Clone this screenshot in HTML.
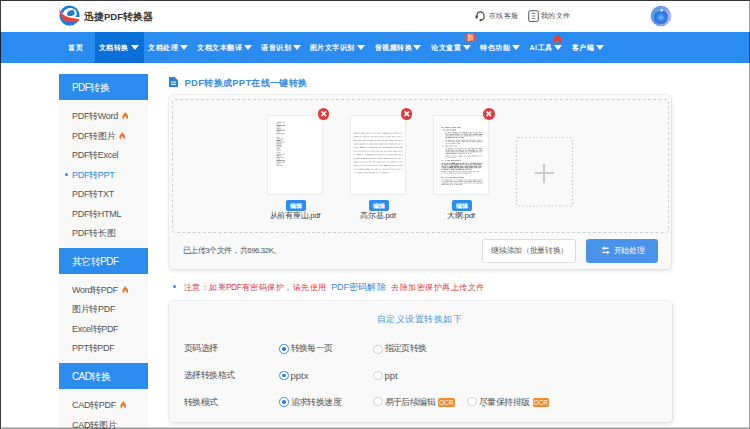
<!DOCTYPE html>
<html><head><meta charset="utf-8">
<style>
*{margin:0;padding:0;box-sizing:border-box}
html,body{width:750px;height:429px;overflow:hidden;background:#fff}
body{position:relative;font-family:"Liberation Sans",sans-serif;color:#333}
.a{position:absolute;white-space:nowrap}
#frame{position:absolute;left:0;top:0;width:750px;height:429px;border-left:1px solid rgba(0,0,0,.75);border-top:1px solid rgba(0,0,0,.78);border-right:1px solid rgba(0,0,0,.4);border-bottom:1px solid rgba(0,0,0,.4);z-index:50;pointer-events:none}
#frame2{position:absolute;left:1px;top:427px;width:748px;height:1px;background:rgba(0,0,0,.19);z-index:49}
#nav{position:absolute;left:0;top:32px;width:750px;height:31px;background:#2a8bf0}
.nt{position:absolute;top:0;height:31px;line-height:31px;font-size:7px;letter-spacing:0.5px;font-weight:700;color:#fff;white-space:nowrap}
.tri{position:absolute;width:0;height:0;border-left:4.4px solid transparent;border-right:4.4px solid transparent;border-top:5px solid #fff}
#side{position:absolute;left:59px;top:74px;width:89px;height:360px;background:#f8f8f8}
.sh{position:absolute;left:59px;width:89px;height:26px;background:#2b8cee;color:#fff;font-size:10px;letter-spacing:-0.6px;line-height:28px;padding-left:13px}
.si{position:absolute;left:72px;font-size:9px;letter-spacing:-0.3px;color:#555;line-height:12px;white-space:nowrap}
.fire{display:inline-block;vertical-align:-0.5px;margin-left:1.5px}
.card{position:absolute;background:#f9f9f9;border-radius:4px;box-shadow:1px 2px 5px rgba(0,0,0,.1),0 0 0 1px rgba(0,0,0,.05)}

.thumb{width:56px;height:80px;background:#fff;border:1px solid #ebebeb;overflow:hidden;position:absolute}
.xbtn{width:11.5px;height:11.5px;border-radius:50%;background:#e23b3b;color:#fff;font-size:7px;line-height:11.5px;text-align:center;font-weight:bold}
.ebtn{width:20.5px;height:11px;background:#2b8cee;border-radius:2px;color:#fff;font-size:6.3px;line-height:11px;text-align:center;font-weight:bold}
.fname{font-size:7.9px;letter-spacing:-0.3px;color:#444;text-align:center;line-height:11px}
.lab{left:184px;font-size:9px;letter-spacing:-0.55px;color:#555;line-height:11px}
.opt{font-size:9px;letter-spacing:-0.55px;color:#555;line-height:11px}
.rad{width:9.5px;height:9.5px;border-radius:50%;border:1px solid #cfcfcf;background:#fff}
.rad.on{border-color:#3a8ee6}
.rad.on::after{content:"";position:absolute;left:2px;top:2px;width:3.5px;height:3.5px;border-radius:50%;background:#2b7fe0}
.ocr{width:16.5px;height:9px;background:#f08a2c;border-radius:2px;color:#fff;font-size:6.6px;line-height:9px;text-align:center;letter-spacing:-0.1px}
</style></head><body>
<div id="frame"></div><div id="frame2"></div>

<!-- header -->
<svg class="a" style="left:57px;top:3px" width="26" height="25" viewBox="0 0 26 25">
  <circle cx="12.5" cy="12.6" r="10.1" fill="#1b7fd9"/>
  <path d="M0 0 H7.5 C6.5 3 6 4.6 5.4 5.6 C4 7 2.6 6 1.8 4.6 Z" fill="#fff"/>
  <ellipse cx="12.8" cy="11" rx="7" ry="5.9" fill="#fff" transform="rotate(-15 12.8 11)"/>
  <ellipse cx="13.8" cy="10.3" rx="4" ry="2.9" fill="#1b7fd9" transform="rotate(-28 13.8 10.3)"/>
  <path d="M2 4.4 C3.5 9.5 8 14.3 22.6 14.0 L22.5 16.2 C8.5 16 3.2 10.5 2 4.6 Z" fill="#fff"/>
  <path d="M2 4.6 C3.2 10.5 8.5 15.8 22.4 16 L21.4 18.8 C14 19.6 9.5 19.2 7 17.2 C4.5 15.2 2.6 11 2 4.6 Z" fill="#e8433b"/>
</svg>
<div class="a" style="left:84px;top:9.5px;font-size:9.5px;font-weight:bold;color:#333;line-height:13px">迅捷PDF转换器</div>

<svg class="a" style="left:475px;top:10px" width="11" height="12" viewBox="0 0 11 12">
  <path d="M2 6.5 V5.5 A3.5 3.6 0 0 1 9 5.5 V7.2 Q9 9.6 5.8 10.2" fill="none" stroke="#444" stroke-width="1.1"/>
  <rect x="0.5" y="5.2" width="2.2" height="3.3" rx=".8" fill="#444"/>
  <circle cx="5.5" cy="10.3" r="1" fill="#333"/>
</svg>
<div class="a" style="left:489px;top:11px;font-size:7.3px;letter-spacing:0.4px;color:#555;line-height:10px">在线客服</div>
<svg class="a" style="left:528px;top:10px" width="11" height="12" viewBox="0 0 11 12">
  <rect x="0.7" y="0.7" width="9.6" height="10.8" rx="1.6" fill="none" stroke="#555" stroke-width="1"/>
  <path d="M3.8 3.4h3.4M3.8 6h3.4M3.8 8.6h3.4" stroke="#666" stroke-width=".8"/>
</svg>
<div class="a" style="left:541px;top:11px;font-size:7.3px;letter-spacing:0.4px;color:#555;line-height:10px">我的文件</div>
<svg class="a" style="left:650px;top:5px" width="22" height="22" viewBox="0 0 22 22">
  <defs><linearGradient id="av" x1="0" y1="0" x2="1" y2="0.3"><stop offset="0" stop-color="#4f95e6"/><stop offset=".6" stop-color="#6a9fe8"/><stop offset="1" stop-color="#b7aeea"/></linearGradient>
  <radialGradient id="av2" cx="50%" cy="50%" r="50%"><stop offset="0" stop-color="#7cb6f4"/><stop offset=".55" stop-color="#3483e6"/><stop offset="1" stop-color="#2a72d8"/></radialGradient></defs>
  <circle cx="11" cy="11" r="10.3" fill="url(#av)"/>
  <path d="M4 13 C4 8 7 6.5 11 6.5 C13 5.5 15.5 6 17 8.5 C18.5 11 18 16 15 18 C12 19.5 7 19 5 16.5 Z" fill="url(#av2)"/>
  <circle cx="11.8" cy="5.3" r="1.2" fill="#e8f0ff" opacity=".9"/>
</svg>

<!-- nav -->
<div id="nav">
  <div style="position:absolute;left:94.5px;top:0;width:49.5px;height:31px;background:#0b6fd8"></div>
  <div class="nt" style="left:68.2px">首页</div>
  <div class="nt" style="left:98.5px">文档转换</div><div class="tri" style="left:131.2px;top:13.3px"></div>
  <div class="nt" style="left:148px">文档处理</div><div class="tri" style="left:180.2px;top:13.3px"></div>
  <div class="nt" style="left:197.2px">文档文本翻译</div><div class="tri" style="left:243.7px;top:13.3px"></div>
  <div class="nt" style="left:261.3px">语音识别</div><div class="tri" style="left:293.2px;top:13.3px"></div>
  <div class="nt" style="left:309.8px">图片文字识别</div><div class="tri" style="left:357.2px;top:13.3px"></div>
  <div class="nt" style="left:374.8px">音视频转换</div><div class="tri" style="left:413.2px;top:13.3px"></div>
  <div class="nt" style="left:431.2px">论文查重</div><div class="tri" style="left:463.2px;top:13.3px"></div>
  <div class="nt" style="left:480px">特色功能</div><div class="tri" style="left:512.2px;top:13.3px"></div>
  <div class="nt" style="left:529.5px">AI工具</div><div class="tri" style="left:553.7px;top:13.3px"></div>
  <div class="nt" style="left:571.5px">客户端</div><div class="tri" style="left:595.7px;top:13.3px"></div>
  <div style="position:absolute;left:465px;top:1px;width:10.5px;height:9px;background:#e35a2a;border-radius:2px;color:#fff;font-size:7px;line-height:9px;text-align:center">新</div><div style="position:absolute;left:469px;top:10px;width:0;height:0;border-left:1.3px solid transparent;border-right:1.3px solid transparent;border-top:1.5px solid #e35a2a"></div>
  <svg style="position:absolute;left:552.5px;top:2px" width="9" height="10" viewBox="0 0 9 10"><path d="M4.5 0 C6 2 9 4 8.5 7 C8.3 9 7 10 6.5 10 C6.8 8 5.5 6.5 4.5 6 C3.5 6.5 2.2 8 2.5 10 C2 10 0.5 9 0.5 7 C0.3 4 3 2 4.5 0 Z" fill="#f03c2a"/></svg>
</div>

<!-- sidebar -->
<div id="side"></div>
<div class="sh" style="top:74px">PDF转换</div>
<div class="si" style="top:110px">PDF转Word <svg class="fire" width="6.5" height="7.5" viewBox="0 0 9 10"><path d="M4.5 0 C6 2 9 4 8.5 7 C8.3 9 7 10 6.5 10 C6.8 8 5.5 6.5 4.5 6 C3.5 6.5 2.2 8 2.5 10 C2 10 0.5 9 0.5 7 C0.3 4 3 2 4.5 0 Z" fill="#f07a2a"/></svg></div>
<div class="si" style="top:129.5px">PDF转图片 <svg class="fire" width="6.5" height="7.5" viewBox="0 0 9 10"><path d="M4.5 0 C6 2 9 4 8.5 7 C8.3 9 7 10 6.5 10 C6.8 8 5.5 6.5 4.5 6 C3.5 6.5 2.2 8 2.5 10 C2 10 0.5 9 0.5 7 C0.3 4 3 2 4.5 0 Z" fill="#f07a2a"/></svg></div>
<div class="si" style="top:149px">PDF转Excel</div>
<div class="a" style="left:64.5px;top:173px;width:3px;height:3px;border-radius:50%;background:#2b8cee"></div>
<div class="si" style="top:168.5px;color:#2b8cee">PDF转PPT</div>
<div class="si" style="top:188px">PDF转TXT</div>
<div class="si" style="top:207.5px">PDF转HTML</div>
<div class="si" style="top:227px">PDF转长图</div>
<div class="sh" style="top:248px">其它转PDF</div>
<div class="si" style="top:283.5px">Word转PDF <svg class="fire" width="6.5" height="7.5" viewBox="0 0 9 10"><path d="M4.5 0 C6 2 9 4 8.5 7 C8.3 9 7 10 6.5 10 C6.8 8 5.5 6.5 4.5 6 C3.5 6.5 2.2 8 2.5 10 C2 10 0.5 9 0.5 7 C0.3 4 3 2 4.5 0 Z" fill="#f07a2a"/></svg></div>
<div class="si" style="top:303px">图片转PDF</div>
<div class="si" style="top:322.5px">Excel转PDF</div>
<div class="si" style="top:342px">PPT转PDF</div>
<div class="sh" style="top:363px">CAD转换</div>
<div class="si" style="top:399px">CAD转PDF <svg class="fire" width="6.5" height="7.5" viewBox="0 0 9 10"><path d="M4.5 0 C6 2 9 4 8.5 7 C8.3 9 7 10 6.5 10 C6.8 8 5.5 6.5 4.5 6 C3.5 6.5 2.2 8 2.5 10 C2 10 0.5 9 0.5 7 C0.3 4 3 2 4.5 0 Z" fill="#f07a2a"/></svg></div>
<div class="si" style="top:418.5px">CAD转图片</div>

<!-- main title -->
<svg class="a" style="left:169px;top:77px" width="9" height="10" viewBox="0 0 9 10"><path d="M0 0 H5.6 L9 3.2 V10 H0 Z" fill="#2a80e2"/><path d="M2 5.2h5M2 7.4h5" stroke="#c4ecff" stroke-width="1.25"/></svg>
<div class="a" style="left:184.5px;top:75.5px;font-size:9.4px;letter-spacing:0.33px;font-weight:bold;color:#3a8ee6;line-height:13px">PDF转换成PPT在线一键转换</div>

<!-- upload card -->
<div class="card" style="left:169px;top:95px;width:502px;height:174px"></div>
<svg class="a" style="left:171px;top:98px" width="500" height="137"><rect x="1.5" y="1.5" width="496" height="133" rx="2.5" fill="none" stroke="#cdcdcd" stroke-width="1" stroke-dasharray="2.8 2.4"/></svg>


<!-- thumbnails -->
<div class="a thumb" style="left:267px;top:115px"><svg width="56" height="80" style="position:absolute;left:-1px;top:-1px"><rect x="9.5" y="6.80" width="5.5" height="0.85" fill="#222" opacity="0.38"/><rect x="15.4" y="6.80" width="2.5" height="0.85" fill="#222" opacity="0.32"/><rect x="9.5" y="8.40" width="2.7" height="0.85" fill="#222" opacity="0.38"/><rect x="12.6" y="8.40" width="0.9" height="0.85" fill="#222" opacity="0.32"/><rect x="9.5" y="10.00" width="4.5" height="0.85" fill="#222" opacity="0.6"/><rect x="14.4" y="10.00" width="3.5" height="0.85" fill="#222" opacity="0.51"/><rect x="9.5" y="11.60" width="2.3" height="0.85" fill="#222" opacity="0.38"/><rect x="12.2" y="11.60" width="1.3" height="0.85" fill="#222" opacity="0.32"/><rect x="9.5" y="13.20" width="2.9" height="0.85" fill="#222" opacity="0.38"/><rect x="12.8" y="13.20" width="1.2" height="0.85" fill="#222" opacity="0.32"/><rect x="9.5" y="14.80" width="4.9" height="0.85" fill="#222" opacity="0.6"/><rect x="14.8" y="14.80" width="3.1" height="0.85" fill="#222" opacity="0.51"/><rect x="9.5" y="16.40" width="1.8" height="0.85" fill="#222" opacity="0.38"/><rect x="11.7" y="16.40" width="1.8" height="0.85" fill="#222" opacity="0.32"/><rect x="9.5" y="18.00" width="4.1" height="0.85" fill="#222" opacity="0.38"/><rect x="14.0" y="18.00" width="3.9" height="0.85" fill="#222" opacity="0.32"/><rect x="9.5" y="21.90" width="2.0" height="0.85" fill="#222" opacity="0.38"/><rect x="11.9" y="21.90" width="1.1" height="0.85" fill="#222" opacity="0.32"/><rect x="9.5" y="23.50" width="4.1" height="0.85" fill="#222" opacity="0.38"/><rect x="14.0" y="23.50" width="2.5" height="0.85" fill="#222" opacity="0.32"/><rect x="9.5" y="25.10" width="3.5" height="0.85" fill="#222" opacity="0.6"/><rect x="13.4" y="25.10" width="1.1" height="0.85" fill="#222" opacity="0.51"/><rect x="9.5" y="26.70" width="5.0" height="0.85" fill="#222" opacity="0.38"/><rect x="14.9" y="26.70" width="3.0" height="0.85" fill="#222" opacity="0.32"/><rect x="9.5" y="28.30" width="3.0" height="0.85" fill="#222" opacity="0.38"/><rect x="12.9" y="28.30" width="1.6" height="0.85" fill="#222" opacity="0.32"/><rect x="9.5" y="29.90" width="2.0" height="0.85" fill="#222" opacity="0.6"/><rect x="11.9" y="29.90" width="2.6" height="0.85" fill="#222" opacity="0.51"/><rect x="9.5" y="31.50" width="2.1" height="0.85" fill="#222" opacity="0.38"/><rect x="12.0" y="31.50" width="2.5" height="0.85" fill="#222" opacity="0.32"/><rect x="9.5" y="33.10" width="1.6" height="0.85" fill="#222" opacity="0.38"/><rect x="11.5" y="33.10" width="1.5" height="0.85" fill="#222" opacity="0.32"/><rect x="9.5" y="34.70" width="2.6" height="0.85" fill="#222" opacity="0.38"/><rect x="12.5" y="34.70" width="1.5" height="0.85" fill="#222" opacity="0.32"/><rect x="9.5" y="37.20" width="2.2" height="0.85" fill="#222" opacity="0.38"/><rect x="12.1" y="37.20" width="1.4" height="0.85" fill="#222" opacity="0.32"/><rect x="9.5" y="38.80" width="4.8" height="0.85" fill="#222" opacity="0.38"/><rect x="14.7" y="38.80" width="3.2" height="0.85" fill="#222" opacity="0.32"/><rect x="9.5" y="40.40" width="2.5" height="0.85" fill="#222" opacity="0.6"/><rect x="12.4" y="40.40" width="1.6" height="0.85" fill="#222" opacity="0.51"/><rect x="9.5" y="42.00" width="3.4" height="0.85" fill="#222" opacity="0.38"/><rect x="13.3" y="42.00" width="3.2" height="0.85" fill="#222" opacity="0.32"/><rect x="9.5" y="43.60" width="2.1" height="0.85" fill="#222" opacity="0.38"/><rect x="12.0" y="43.60" width="1.0" height="0.85" fill="#222" opacity="0.32"/><rect x="9.5" y="45.20" width="5.0" height="0.85" fill="#222" opacity="0.6"/><rect x="14.9" y="45.20" width="3.0" height="0.85" fill="#222" opacity="0.51"/><rect x="9.5" y="46.80" width="5.9" height="0.85" fill="#222" opacity="0.38"/><rect x="15.8" y="46.80" width="2.1" height="0.85" fill="#222" opacity="0.32"/><rect x="9.5" y="48.40" width="1.7" height="0.85" fill="#222" opacity="0.38"/><rect x="11.6" y="48.40" width="1.9" height="0.85" fill="#222" opacity="0.32"/><rect x="9.5" y="50.00" width="3.0" height="0.85" fill="#222" opacity="0.38"/><rect x="12.9" y="50.00" width="2.6" height="0.85" fill="#222" opacity="0.32"/></svg></div>
<div class="a xbtn" style="left:317.5px;top:108px"><svg width="11.5" height="11.5" viewBox="0 0 11.5 11.5" style="display:block"><path d="M3.9 3.9L7.6 7.6M7.6 3.9L3.9 7.6" stroke="#fff" stroke-width="1.5" stroke-linecap="round"/></svg></div>
<div class="a ebtn" style="left:285.5px;top:199.5px">编辑</div>
<div class="a fname" style="left:255px;width:80px;top:210px">从前有座山.pdf</div>

<div class="a thumb" style="left:350px;top:115px"><svg width="56" height="80" style="position:absolute;left:-1px;top:-1px"><rect x="3.8" y="17.80" width="3.2" height="0.8" fill="#222" opacity="0.40"/><rect x="7.6" y="17.80" width="2.0" height="0.8" fill="#222" opacity="0.40"/><rect x="10.7" y="17.80" width="4.4" height="0.8" fill="#222" opacity="0.40"/><rect x="16.0" y="17.80" width="4.0" height="0.8" fill="#222" opacity="0.30"/><rect x="20.7" y="17.80" width="2.6" height="0.8" fill="#222" opacity="0.26"/><rect x="23.7" y="17.80" width="2.3" height="0.8" fill="#222" opacity="0.30"/><rect x="26.8" y="17.80" width="4.8" height="0.8" fill="#222" opacity="0.34"/><rect x="32.6" y="17.80" width="5.0" height="0.8" fill="#222" opacity="0.43"/><rect x="38.1" y="17.80" width="2.0" height="0.8" fill="#222" opacity="0.30"/><rect x="40.7" y="17.80" width="2.0" height="0.8" fill="#222" opacity="0.36"/><rect x="43.6" y="17.80" width="4.4" height="0.8" fill="#222" opacity="0.34"/><rect x="48.8" y="17.80" width="3.7" height="0.8" fill="#222" opacity="0.28"/><rect x="3.8" y="21.40" width="4.7" height="0.8" fill="#222" opacity="0.40"/><rect x="9.3" y="21.40" width="3.0" height="0.8" fill="#222" opacity="0.29"/><rect x="13.2" y="21.40" width="2.5" height="0.8" fill="#222" opacity="0.40"/><rect x="16.6" y="21.40" width="2.7" height="0.8" fill="#222" opacity="0.33"/><rect x="20.3" y="21.40" width="4.0" height="0.8" fill="#222" opacity="0.29"/><rect x="24.7" y="21.40" width="1.8" height="0.8" fill="#222" opacity="0.41"/><rect x="27.4" y="21.40" width="1.8" height="0.8" fill="#222" opacity="0.40"/><rect x="30.1" y="21.40" width="3.7" height="0.8" fill="#222" opacity="0.33"/><rect x="34.6" y="21.40" width="1.7" height="0.8" fill="#222" opacity="0.26"/><rect x="37.3" y="21.40" width="3.7" height="0.8" fill="#222" opacity="0.35"/><rect x="41.9" y="21.40" width="2.8" height="0.8" fill="#222" opacity="0.41"/><rect x="45.6" y="21.40" width="2.0" height="0.8" fill="#222" opacity="0.30"/><rect x="48.2" y="21.40" width="2.1" height="0.8" fill="#222" opacity="0.36"/><rect x="50.9" y="21.40" width="1.6" height="0.8" fill="#222" opacity="0.29"/><rect x="3.8" y="25.00" width="2.5" height="0.8" fill="#222" opacity="0.34"/><rect x="7.1" y="25.00" width="4.6" height="0.8" fill="#222" opacity="0.34"/><rect x="12.7" y="25.00" width="3.1" height="0.8" fill="#222" opacity="0.35"/><rect x="16.5" y="25.00" width="1.3" height="0.8" fill="#222" opacity="0.34"/><rect x="18.3" y="25.00" width="1.2" height="0.8" fill="#222" opacity="0.40"/><rect x="20.0" y="25.00" width="3.0" height="0.8" fill="#222" opacity="0.39"/><rect x="23.7" y="25.00" width="2.4" height="0.8" fill="#222" opacity="0.35"/><rect x="26.9" y="25.00" width="4.2" height="0.8" fill="#222" opacity="0.28"/><rect x="31.8" y="25.00" width="2.1" height="0.8" fill="#222" opacity="0.31"/><rect x="34.8" y="25.00" width="3.1" height="0.8" fill="#222" opacity="0.36"/><rect x="38.8" y="25.00" width="4.7" height="0.8" fill="#222" opacity="0.34"/><rect x="44.3" y="25.00" width="3.1" height="0.8" fill="#222" opacity="0.35"/><rect x="48.2" y="25.00" width="2.9" height="0.8" fill="#222" opacity="0.35"/><rect x="51.8" y="25.00" width="0.7" height="0.8" fill="#222" opacity="0.38"/><rect x="3.8" y="28.60" width="4.8" height="0.8" fill="#222" opacity="0.31"/><rect x="9.3" y="28.60" width="4.8" height="0.8" fill="#222" opacity="0.40"/><rect x="14.6" y="28.60" width="1.7" height="0.8" fill="#222" opacity="0.34"/><rect x="16.7" y="28.60" width="2.1" height="0.8" fill="#222" opacity="0.28"/><rect x="19.6" y="28.60" width="4.2" height="0.8" fill="#222" opacity="0.41"/><rect x="24.3" y="28.60" width="3.9" height="0.8" fill="#222" opacity="0.38"/><rect x="28.7" y="28.60" width="4.6" height="0.8" fill="#222" opacity="0.43"/><rect x="33.8" y="28.60" width="4.8" height="0.8" fill="#222" opacity="0.33"/><rect x="39.3" y="28.60" width="5.0" height="0.8" fill="#222" opacity="0.40"/><rect x="44.7" y="28.60" width="2.8" height="0.8" fill="#222" opacity="0.35"/><rect x="48.2" y="28.60" width="1.9" height="0.8" fill="#222" opacity="0.31"/><rect x="51.0" y="28.60" width="1.3" height="0.8" fill="#222" opacity="0.35"/><rect x="3.8" y="32.20" width="1.3" height="0.8" fill="#222" opacity="0.31"/><rect x="5.8" y="32.20" width="3.1" height="0.8" fill="#222" opacity="0.28"/><rect x="10.0" y="32.20" width="4.2" height="0.8" fill="#222" opacity="0.43"/><rect x="14.6" y="32.20" width="2.2" height="0.8" fill="#222" opacity="0.28"/><rect x="17.7" y="32.20" width="2.2" height="0.8" fill="#222" opacity="0.29"/><rect x="20.6" y="32.20" width="4.7" height="0.8" fill="#222" opacity="0.40"/><rect x="25.8" y="32.20" width="1.8" height="0.8" fill="#222" opacity="0.41"/><rect x="28.3" y="32.20" width="3.9" height="0.8" fill="#222" opacity="0.28"/><rect x="32.6" y="32.20" width="3.8" height="0.8" fill="#222" opacity="0.34"/><rect x="36.9" y="32.20" width="4.8" height="0.8" fill="#222" opacity="0.38"/><rect x="42.5" y="32.20" width="1.5" height="0.8" fill="#222" opacity="0.41"/><rect x="44.5" y="32.20" width="4.5" height="0.8" fill="#222" opacity="0.34"/><rect x="49.6" y="32.20" width="2.9" height="0.8" fill="#222" opacity="0.43"/><rect x="3.8" y="35.80" width="1.7" height="0.8" fill="#222" opacity="0.35"/><rect x="6.0" y="35.80" width="1.6" height="0.8" fill="#222" opacity="0.29"/><rect x="8.1" y="35.80" width="2.0" height="0.8" fill="#222" opacity="0.31"/><rect x="10.6" y="35.80" width="4.1" height="0.8" fill="#222" opacity="0.31"/><rect x="15.4" y="35.80" width="1.9" height="0.8" fill="#222" opacity="0.33"/><rect x="17.7" y="35.80" width="2.2" height="0.8" fill="#222" opacity="0.26"/><rect x="20.7" y="35.80" width="3.3" height="0.8" fill="#222" opacity="0.30"/><rect x="24.7" y="35.80" width="4.8" height="0.8" fill="#222" opacity="0.28"/><rect x="30.3" y="35.80" width="2.8" height="0.8" fill="#222" opacity="0.35"/><rect x="34.1" y="35.80" width="2.7" height="0.8" fill="#222" opacity="0.35"/><rect x="37.6" y="35.80" width="4.9" height="0.8" fill="#222" opacity="0.33"/><rect x="43.4" y="35.80" width="3.9" height="0.8" fill="#222" opacity="0.38"/><rect x="47.9" y="35.80" width="2.5" height="0.8" fill="#222" opacity="0.28"/><rect x="50.9" y="35.80" width="1.5" height="0.8" fill="#222" opacity="0.39"/><rect x="3.8" y="39.40" width="1.8" height="0.8" fill="#222" opacity="0.28"/><rect x="6.5" y="39.40" width="4.5" height="0.8" fill="#222" opacity="0.38"/><rect x="11.6" y="39.40" width="2.1" height="0.8" fill="#222" opacity="0.31"/><rect x="14.4" y="39.40" width="1.8" height="0.8" fill="#222" opacity="0.34"/><rect x="16.8" y="39.40" width="4.9" height="0.8" fill="#222" opacity="0.43"/><rect x="22.3" y="39.40" width="2.1" height="0.8" fill="#222" opacity="0.43"/><rect x="25.1" y="39.40" width="2.6" height="0.8" fill="#222" opacity="0.26"/><rect x="28.2" y="39.40" width="3.0" height="0.8" fill="#222" opacity="0.35"/><rect x="31.8" y="39.40" width="3.1" height="0.8" fill="#222" opacity="0.26"/><rect x="35.4" y="39.40" width="1.5" height="0.8" fill="#222" opacity="0.33"/><rect x="37.4" y="39.40" width="1.3" height="0.8" fill="#222" opacity="0.31"/><rect x="39.2" y="39.40" width="3.4" height="0.8" fill="#222" opacity="0.35"/><rect x="43.5" y="39.40" width="3.7" height="0.8" fill="#222" opacity="0.39"/><rect x="48.1" y="39.40" width="2.7" height="0.8" fill="#222" opacity="0.31"/><rect x="51.8" y="39.40" width="0.7" height="0.8" fill="#222" opacity="0.39"/><rect x="3.8" y="43.00" width="1.4" height="0.8" fill="#222" opacity="0.40"/><rect x="6.1" y="43.00" width="3.6" height="0.8" fill="#222" opacity="0.39"/><rect x="10.6" y="43.00" width="1.7" height="0.8" fill="#222" opacity="0.35"/><rect x="13.0" y="43.00" width="4.4" height="0.8" fill="#222" opacity="0.40"/><rect x="18.3" y="43.00" width="3.4" height="0.8" fill="#222" opacity="0.41"/><rect x="22.5" y="43.00" width="3.8" height="0.8" fill="#222" opacity="0.30"/><rect x="26.8" y="43.00" width="1.7" height="0.8" fill="#222" opacity="0.33"/><rect x="28.9" y="43.00" width="4.4" height="0.8" fill="#222" opacity="0.36"/><rect x="34.1" y="43.00" width="3.6" height="0.8" fill="#222" opacity="0.38"/><rect x="38.4" y="43.00" width="1.2" height="0.8" fill="#222" opacity="0.40"/><rect x="40.4" y="43.00" width="3.1" height="0.8" fill="#222" opacity="0.35"/><rect x="44.3" y="43.00" width="1.5" height="0.8" fill="#222" opacity="0.39"/><rect x="46.3" y="43.00" width="1.5" height="0.8" fill="#222" opacity="0.31"/><rect x="48.6" y="43.00" width="2.0" height="0.8" fill="#222" opacity="0.39"/><rect x="51.6" y="43.00" width="0.9" height="0.8" fill="#222" opacity="0.33"/><rect x="3.8" y="46.60" width="3.8" height="0.8" fill="#222" opacity="0.39"/><rect x="8.4" y="46.60" width="3.6" height="0.8" fill="#222" opacity="0.28"/><rect x="12.5" y="46.60" width="2.2" height="0.8" fill="#222" opacity="0.39"/><rect x="15.2" y="46.60" width="3.4" height="0.8" fill="#222" opacity="0.26"/><rect x="19.0" y="46.60" width="2.2" height="0.8" fill="#222" opacity="0.38"/><rect x="22.1" y="46.60" width="3.8" height="0.8" fill="#222" opacity="0.31"/><rect x="26.6" y="46.60" width="3.0" height="0.8" fill="#222" opacity="0.34"/><rect x="30.0" y="46.60" width="4.6" height="0.8" fill="#222" opacity="0.30"/><rect x="35.6" y="46.60" width="4.8" height="0.8" fill="#222" opacity="0.26"/><rect x="41.0" y="46.60" width="4.3" height="0.8" fill="#222" opacity="0.43"/><rect x="46.0" y="46.60" width="2.2" height="0.8" fill="#222" opacity="0.30"/><rect x="49.2" y="46.60" width="2.0" height="0.8" fill="#222" opacity="0.36"/><rect x="51.7" y="46.60" width="0.8" height="0.8" fill="#222" opacity="0.43"/><rect x="3.8" y="50.20" width="4.3" height="0.8" fill="#222" opacity="0.35"/><rect x="9.0" y="50.20" width="3.9" height="0.8" fill="#222" opacity="0.30"/><rect x="13.9" y="50.20" width="3.0" height="0.8" fill="#222" opacity="0.26"/><rect x="17.3" y="50.20" width="3.1" height="0.8" fill="#222" opacity="0.34"/><rect x="21.0" y="50.20" width="1.7" height="0.8" fill="#222" opacity="0.33"/><rect x="23.3" y="50.20" width="4.4" height="0.8" fill="#222" opacity="0.26"/><rect x="28.5" y="50.20" width="4.4" height="0.8" fill="#222" opacity="0.29"/><rect x="33.9" y="50.20" width="3.9" height="0.8" fill="#222" opacity="0.41"/><rect x="38.4" y="50.20" width="2.6" height="0.8" fill="#222" opacity="0.33"/><rect x="42.0" y="50.20" width="3.4" height="0.8" fill="#222" opacity="0.33"/><rect x="46.1" y="50.20" width="2.2" height="0.8" fill="#222" opacity="0.28"/><rect x="48.8" y="50.20" width="3.7" height="0.8" fill="#222" opacity="0.31"/><rect x="3.8" y="53.80" width="2.1" height="0.8" fill="#222" opacity="0.31"/><rect x="6.7" y="53.80" width="1.9" height="0.8" fill="#222" opacity="0.33"/><rect x="9.5" y="53.80" width="4.6" height="0.8" fill="#222" opacity="0.40"/><rect x="14.9" y="53.80" width="4.7" height="0.8" fill="#222" opacity="0.43"/><rect x="20.3" y="53.80" width="3.9" height="0.8" fill="#222" opacity="0.28"/><rect x="25.1" y="53.80" width="2.9" height="0.8" fill="#222" opacity="0.39"/><rect x="28.8" y="53.80" width="2.3" height="0.8" fill="#222" opacity="0.28"/><rect x="32.0" y="53.80" width="1.7" height="0.8" fill="#222" opacity="0.34"/><rect x="34.3" y="53.80" width="2.3" height="0.8" fill="#222" opacity="0.39"/><rect x="37.6" y="53.80" width="2.2" height="0.8" fill="#222" opacity="0.38"/><rect x="40.4" y="53.80" width="3.3" height="0.8" fill="#222" opacity="0.33"/><rect x="44.2" y="53.80" width="1.8" height="0.8" fill="#222" opacity="0.30"/><rect x="47.0" y="53.80" width="3.1" height="0.8" fill="#222" opacity="0.30"/><rect x="51.0" y="53.80" width="1.5" height="0.8" fill="#222" opacity="0.34"/><rect x="3.8" y="57.40" width="1.9" height="0.8" fill="#222" opacity="0.28"/><rect x="6.3" y="57.40" width="1.5" height="0.8" fill="#222" opacity="0.30"/><rect x="8.4" y="57.40" width="3.4" height="0.8" fill="#222" opacity="0.41"/><rect x="12.7" y="57.40" width="2.8" height="0.8" fill="#222" opacity="0.34"/><rect x="16.1" y="57.40" width="2.6" height="0.8" fill="#222" opacity="0.33"/><rect x="19.2" y="57.40" width="2.3" height="0.8" fill="#222" opacity="0.43"/><rect x="21.9" y="57.40" width="3.1" height="0.8" fill="#222" opacity="0.36"/><rect x="26.0" y="57.40" width="2.0" height="0.8" fill="#222" opacity="0.31"/><rect x="28.5" y="57.40" width="2.7" height="0.8" fill="#222" opacity="0.34"/><rect x="32.2" y="57.40" width="4.4" height="0.8" fill="#222" opacity="0.41"/><rect x="37.1" y="57.40" width="1.3" height="0.8" fill="#222" opacity="0.39"/><rect x="39.3" y="57.40" width="0.7" height="0.8" fill="#222" opacity="0.36"/></svg></div>
<div class="a xbtn" style="left:400.5px;top:108px"><svg width="11.5" height="11.5" viewBox="0 0 11.5 11.5" style="display:block"><path d="M3.9 3.9L7.6 7.6M7.6 3.9L3.9 7.6" stroke="#fff" stroke-width="1.5" stroke-linecap="round"/></svg></div>
<div class="a ebtn" style="left:368.5px;top:199.5px">编辑</div>
<div class="a fname" style="left:338px;width:80px;top:210px">高尔基.pdf</div>

<div class="a thumb" style="left:433px;top:115px"><svg width="56" height="80" style="position:absolute;left:-1px;top:-1px"><rect x="8.5" y="12.30" width="2.0" height="0.75" fill="#222" opacity="0.57"/><rect x="12.0" y="12.30" width="4.5" height="0.75" fill="#222" opacity="0.58"/><rect x="17.0" y="12.30" width="1.6" height="0.75" fill="#222" opacity="0.39"/><rect x="19.3" y="12.30" width="3.8" height="0.75" fill="#222" opacity="0.57"/><rect x="24.0" y="12.30" width="3.7" height="0.75" fill="#222" opacity="0.54"/><rect x="9.5" y="14.60" width="3.3" height="0.75" fill="#222" opacity="0.46"/><rect x="13.7" y="14.60" width="2.1" height="0.75" fill="#222" opacity="0.72"/><rect x="16.5" y="14.60" width="2.4" height="0.75" fill="#222" opacity="0.49"/><rect x="19.4" y="14.60" width="3.6" height="0.75" fill="#222" opacity="0.67"/><rect x="12.5" y="17.40" width="1.5" height="0.75" fill="#222" opacity="0.52"/><rect x="14.7" y="17.40" width="2.7" height="0.75" fill="#222" opacity="0.43"/><rect x="18.2" y="17.40" width="1.2" height="0.75" fill="#222" opacity="0.46"/><rect x="20.1" y="17.40" width="4.8" height="0.75" fill="#222" opacity="0.55"/><rect x="25.8" y="17.40" width="3.0" height="0.75" fill="#222" opacity="0.45"/><rect x="29.4" y="17.40" width="4.9" height="0.75" fill="#222" opacity="0.57"/><rect x="34.8" y="17.40" width="1.3" height="0.75" fill="#222" opacity="0.51"/><rect x="36.9" y="17.40" width="2.8" height="0.75" fill="#222" opacity="0.45"/><rect x="40.5" y="17.40" width="4.7" height="0.75" fill="#222" opacity="0.43"/><rect x="45.7" y="17.40" width="2.5" height="0.75" fill="#222" opacity="0.49"/><rect x="48.9" y="17.40" width="0.6" height="0.75" fill="#222" opacity="0.58"/><rect x="12.5" y="18.95" width="3.1" height="0.75" fill="#222" opacity="0.43"/><rect x="16.6" y="18.95" width="2.4" height="0.75" fill="#222" opacity="0.59"/><rect x="19.5" y="18.95" width="2.0" height="0.75" fill="#222" opacity="0.58"/><rect x="22.1" y="18.95" width="4.8" height="0.75" fill="#222" opacity="0.51"/><rect x="27.5" y="18.95" width="2.0" height="0.75" fill="#222" opacity="0.49"/><rect x="30.3" y="18.95" width="4.8" height="0.75" fill="#222" opacity="0.42"/><rect x="35.8" y="18.95" width="2.0" height="0.75" fill="#222" opacity="0.62"/><rect x="38.3" y="18.95" width="1.4" height="0.75" fill="#222" opacity="0.41"/><rect x="40.3" y="18.95" width="4.6" height="0.75" fill="#222" opacity="0.61"/><rect x="45.7" y="18.95" width="3.8" height="0.75" fill="#222" opacity="0.62"/><rect x="12.5" y="20.50" width="1.9" height="0.75" fill="#222" opacity="0.62"/><rect x="15.3" y="20.50" width="1.3" height="0.75" fill="#222" opacity="0.55"/><rect x="17.2" y="20.50" width="2.6" height="0.75" fill="#222" opacity="0.46"/><rect x="20.3" y="20.50" width="1.2" height="0.75" fill="#222" opacity="0.45"/><rect x="22.1" y="20.50" width="4.8" height="0.75" fill="#222" opacity="0.42"/><rect x="28.0" y="20.50" width="2.0" height="0.75" fill="#222" opacity="0.48"/><rect x="30.8" y="20.50" width="4.3" height="0.75" fill="#222" opacity="0.49"/><rect x="35.6" y="20.50" width="3.0" height="0.75" fill="#222" opacity="0.48"/><rect x="39.5" y="20.50" width="1.9" height="0.75" fill="#222" opacity="0.48"/><rect x="42.4" y="20.50" width="1.3" height="0.75" fill="#222" opacity="0.49"/><rect x="44.6" y="20.50" width="4.1" height="0.75" fill="#222" opacity="0.39"/><rect x="12.5" y="22.05" width="1.4" height="0.75" fill="#222" opacity="0.61"/><rect x="14.5" y="22.05" width="4.0" height="0.75" fill="#222" opacity="0.61"/><rect x="19.1" y="22.05" width="2.2" height="0.75" fill="#222" opacity="0.62"/><rect x="22.1" y="22.05" width="2.2" height="0.75" fill="#222" opacity="0.57"/><rect x="24.9" y="22.05" width="2.2" height="0.75" fill="#222" opacity="0.39"/><rect x="28.0" y="22.05" width="3.0" height="0.75" fill="#222" opacity="0.54"/><rect x="12.5" y="24.80" width="1.3" height="0.75" fill="#222" opacity="0.35"/><rect x="14.5" y="24.80" width="4.8" height="0.75" fill="#222" opacity="0.49"/><rect x="19.9" y="24.80" width="2.2" height="0.75" fill="#222" opacity="0.39"/><rect x="22.8" y="24.80" width="4.7" height="0.75" fill="#222" opacity="0.33"/><rect x="28.4" y="24.80" width="4.0" height="0.75" fill="#222" opacity="0.46"/><rect x="33.3" y="24.80" width="3.5" height="0.75" fill="#222" opacity="0.36"/><rect x="37.4" y="24.80" width="2.6" height="0.75" fill="#222" opacity="0.46"/><rect x="40.4" y="24.80" width="1.9" height="0.75" fill="#222" opacity="0.45"/><rect x="42.9" y="24.80" width="1.4" height="0.75" fill="#222" opacity="0.30"/><rect x="45.1" y="24.80" width="2.4" height="0.75" fill="#222" opacity="0.49"/><rect x="48.4" y="24.80" width="1.1" height="0.75" fill="#222" opacity="0.36"/><rect x="12.5" y="26.35" width="1.6" height="0.75" fill="#222" opacity="0.41"/><rect x="14.9" y="26.35" width="2.9" height="0.75" fill="#222" opacity="0.35"/><rect x="18.4" y="26.35" width="3.6" height="0.75" fill="#222" opacity="0.43"/><rect x="22.8" y="26.35" width="4.4" height="0.75" fill="#222" opacity="0.43"/><rect x="27.7" y="26.35" width="4.4" height="0.75" fill="#222" opacity="0.36"/><rect x="32.9" y="26.35" width="2.6" height="0.75" fill="#222" opacity="0.45"/><rect x="36.0" y="26.35" width="2.1" height="0.75" fill="#222" opacity="0.35"/><rect x="38.6" y="26.35" width="4.6" height="0.75" fill="#222" opacity="0.42"/><rect x="43.8" y="26.35" width="2.7" height="0.75" fill="#222" opacity="0.49"/><rect x="47.2" y="26.35" width="2.1" height="0.75" fill="#222" opacity="0.46"/><rect x="12.5" y="27.90" width="5.0" height="0.75" fill="#222" opacity="0.32"/><rect x="18.2" y="27.90" width="4.3" height="0.75" fill="#222" opacity="0.46"/><rect x="23.4" y="27.90" width="1.4" height="0.75" fill="#222" opacity="0.36"/><rect x="25.2" y="27.90" width="1.9" height="0.75" fill="#222" opacity="0.49"/><rect x="8.5" y="30.60" width="2.0" height="0.75" fill="#222" opacity="0.43"/><rect x="12.0" y="30.60" width="2.9" height="0.75" fill="#222" opacity="0.48"/><rect x="15.8" y="30.60" width="4.8" height="0.75" fill="#222" opacity="0.43"/><rect x="21.3" y="30.60" width="2.7" height="0.75" fill="#222" opacity="0.46"/><rect x="12.5" y="33.40" width="1.7" height="0.75" fill="#222" opacity="0.41"/><rect x="14.8" y="33.40" width="3.5" height="0.75" fill="#222" opacity="0.51"/><rect x="18.8" y="33.40" width="1.2" height="0.75" fill="#222" opacity="0.43"/><rect x="20.8" y="33.40" width="1.9" height="0.75" fill="#222" opacity="0.42"/><rect x="23.3" y="33.40" width="4.2" height="0.75" fill="#222" opacity="0.48"/><rect x="27.9" y="33.40" width="1.6" height="0.75" fill="#222" opacity="0.45"/><rect x="30.2" y="33.40" width="3.6" height="0.75" fill="#222" opacity="0.38"/><rect x="34.4" y="33.40" width="3.8" height="0.75" fill="#222" opacity="0.45"/><rect x="38.8" y="33.40" width="2.4" height="0.75" fill="#222" opacity="0.58"/><rect x="41.7" y="33.40" width="3.4" height="0.75" fill="#222" opacity="0.43"/><rect x="45.7" y="33.40" width="3.8" height="0.75" fill="#222" opacity="0.58"/><rect x="12.5" y="34.95" width="1.9" height="0.75" fill="#222" opacity="0.52"/><rect x="15.0" y="34.95" width="1.2" height="0.75" fill="#222" opacity="0.57"/><rect x="16.8" y="34.95" width="4.3" height="0.75" fill="#222" opacity="0.45"/><rect x="22.1" y="34.95" width="3.0" height="0.75" fill="#222" opacity="0.39"/><rect x="25.5" y="34.95" width="3.3" height="0.75" fill="#222" opacity="0.51"/><rect x="29.7" y="34.95" width="1.5" height="0.75" fill="#222" opacity="0.49"/><rect x="31.9" y="34.95" width="3.1" height="0.75" fill="#222" opacity="0.39"/><rect x="35.5" y="34.95" width="3.2" height="0.75" fill="#222" opacity="0.57"/><rect x="39.2" y="34.95" width="3.1" height="0.75" fill="#222" opacity="0.54"/><rect x="43.2" y="34.95" width="1.9" height="0.75" fill="#222" opacity="0.38"/><rect x="46.2" y="34.95" width="3.3" height="0.75" fill="#222" opacity="0.46"/><rect x="12.5" y="36.50" width="4.7" height="0.75" fill="#222" opacity="0.45"/><rect x="18.2" y="36.50" width="3.6" height="0.75" fill="#222" opacity="0.54"/><rect x="22.2" y="36.50" width="4.2" height="0.75" fill="#222" opacity="0.41"/><rect x="27.0" y="36.50" width="4.4" height="0.75" fill="#222" opacity="0.55"/><rect x="32.0" y="36.50" width="2.0" height="0.75" fill="#222" opacity="0.45"/><rect x="34.7" y="36.50" width="2.7" height="0.75" fill="#222" opacity="0.38"/><rect x="37.9" y="36.50" width="4.0" height="0.75" fill="#222" opacity="0.57"/><rect x="42.3" y="36.50" width="3.3" height="0.75" fill="#222" opacity="0.52"/><rect x="46.1" y="36.50" width="3.4" height="0.75" fill="#222" opacity="0.38"/><rect x="12.5" y="38.05" width="3.3" height="0.75" fill="#222" opacity="0.49"/><rect x="16.4" y="38.05" width="2.8" height="0.75" fill="#222" opacity="0.49"/><rect x="19.8" y="38.05" width="3.7" height="0.75" fill="#222" opacity="0.46"/><rect x="24.2" y="38.05" width="1.3" height="0.75" fill="#222" opacity="0.49"/><rect x="26.2" y="38.05" width="2.1" height="0.75" fill="#222" opacity="0.54"/><rect x="29.1" y="38.05" width="2.9" height="0.75" fill="#222" opacity="0.39"/><rect x="32.8" y="38.05" width="1.6" height="0.75" fill="#222" opacity="0.39"/><rect x="35.0" y="38.05" width="1.5" height="0.75" fill="#222" opacity="0.45"/><rect x="37.3" y="38.05" width="1.1" height="0.75" fill="#222" opacity="0.51"/><rect x="12.5" y="40.60" width="4.0" height="0.75" fill="#222" opacity="0.42"/><rect x="17.2" y="40.60" width="1.4" height="0.75" fill="#222" opacity="0.38"/><rect x="19.2" y="40.60" width="4.8" height="0.75" fill="#222" opacity="0.30"/><rect x="25.0" y="40.60" width="5.0" height="0.75" fill="#222" opacity="0.42"/><rect x="30.8" y="40.60" width="1.9" height="0.75" fill="#222" opacity="0.46"/><rect x="33.5" y="40.60" width="4.8" height="0.75" fill="#222" opacity="0.45"/><rect x="38.8" y="40.60" width="4.2" height="0.75" fill="#222" opacity="0.45"/><rect x="43.4" y="40.60" width="2.5" height="0.75" fill="#222" opacity="0.42"/><rect x="46.5" y="40.60" width="3.0" height="0.75" fill="#222" opacity="0.33"/><rect x="12.5" y="42.15" width="1.7" height="0.75" fill="#222" opacity="0.38"/><rect x="15.2" y="42.15" width="2.0" height="0.75" fill="#222" opacity="0.33"/><rect x="17.9" y="42.15" width="2.4" height="0.75" fill="#222" opacity="0.29"/><rect x="20.8" y="42.15" width="1.8" height="0.75" fill="#222" opacity="0.45"/><rect x="8.5" y="45.30" width="2.0" height="0.75" fill="#222" opacity="0.39"/><rect x="12.0" y="45.30" width="1.6" height="0.75" fill="#222" opacity="0.48"/><rect x="14.4" y="45.30" width="2.6" height="0.75" fill="#222" opacity="0.55"/><rect x="17.7" y="45.30" width="3.4" height="0.75" fill="#222" opacity="0.55"/><rect x="21.6" y="45.30" width="5.0" height="0.75" fill="#222" opacity="0.49"/><rect x="27.2" y="45.30" width="0.8" height="0.75" fill="#222" opacity="0.42"/><rect x="8.5" y="47.90" width="3.4" height="0.75" fill="#222" opacity="0.62"/><rect x="12.8" y="47.90" width="2.9" height="0.75" fill="#222" opacity="0.57"/><rect x="16.5" y="47.90" width="1.4" height="0.75" fill="#222" opacity="0.77"/><rect x="18.4" y="47.90" width="3.6" height="0.75" fill="#222" opacity="0.83"/><rect x="22.8" y="47.90" width="3.7" height="0.75" fill="#222" opacity="0.61"/><rect x="26.9" y="47.90" width="1.3" height="0.75" fill="#222" opacity="0.55"/><rect x="29.0" y="47.90" width="2.8" height="0.75" fill="#222" opacity="0.68"/><rect x="32.8" y="47.90" width="1.7" height="0.75" fill="#222" opacity="0.58"/><rect x="35.3" y="47.90" width="1.3" height="0.75" fill="#222" opacity="0.51"/><rect x="37.2" y="47.90" width="1.6" height="0.75" fill="#222" opacity="0.62"/><rect x="39.3" y="47.90" width="3.4" height="0.75" fill="#222" opacity="0.70"/><rect x="43.3" y="47.90" width="3.6" height="0.75" fill="#222" opacity="0.67"/><rect x="47.3" y="47.90" width="2.2" height="0.75" fill="#222" opacity="0.58"/><rect x="8.5" y="49.40" width="1.6" height="0.75" fill="#222" opacity="0.71"/><rect x="11.0" y="49.40" width="4.2" height="0.75" fill="#222" opacity="0.64"/><rect x="15.7" y="49.40" width="1.2" height="0.75" fill="#222" opacity="0.72"/><rect x="17.7" y="49.40" width="2.5" height="0.75" fill="#222" opacity="0.72"/><rect x="20.9" y="49.40" width="4.8" height="0.75" fill="#222" opacity="0.75"/><rect x="26.2" y="49.40" width="4.6" height="0.75" fill="#222" opacity="0.52"/><rect x="31.6" y="49.40" width="2.7" height="0.75" fill="#222" opacity="0.58"/><rect x="34.7" y="49.40" width="4.2" height="0.75" fill="#222" opacity="0.51"/><rect x="39.6" y="49.40" width="4.8" height="0.75" fill="#222" opacity="0.55"/><rect x="44.9" y="49.40" width="3.5" height="0.75" fill="#222" opacity="0.67"/><rect x="8.5" y="50.90" width="4.3" height="0.75" fill="#222" opacity="0.57"/><rect x="13.4" y="50.90" width="2.3" height="0.75" fill="#222" opacity="0.52"/><rect x="16.7" y="50.90" width="4.2" height="0.75" fill="#222" opacity="0.74"/><rect x="21.2" y="50.90" width="4.4" height="0.75" fill="#222" opacity="0.75"/><rect x="26.3" y="50.90" width="4.0" height="0.75" fill="#222" opacity="0.65"/><rect x="30.9" y="50.90" width="1.6" height="0.75" fill="#222" opacity="0.58"/><rect x="32.9" y="50.90" width="2.5" height="0.75" fill="#222" opacity="0.75"/><rect x="36.2" y="50.90" width="4.4" height="0.75" fill="#222" opacity="0.74"/><rect x="41.2" y="50.90" width="3.3" height="0.75" fill="#222" opacity="0.65"/><rect x="45.3" y="50.90" width="3.2" height="0.75" fill="#222" opacity="0.59"/><rect x="8.5" y="52.40" width="4.9" height="0.75" fill="#222" opacity="0.58"/><rect x="14.3" y="52.40" width="1.3" height="0.75" fill="#222" opacity="0.59"/><rect x="16.1" y="52.40" width="4.0" height="0.75" fill="#222" opacity="0.81"/><rect x="21.0" y="52.40" width="2.4" height="0.75" fill="#222" opacity="0.80"/><rect x="24.0" y="52.40" width="2.1" height="0.75" fill="#222" opacity="0.80"/><rect x="26.9" y="52.40" width="3.8" height="0.75" fill="#222" opacity="0.72"/><rect x="31.7" y="52.40" width="3.0" height="0.75" fill="#222" opacity="0.78"/><rect x="35.5" y="52.40" width="4.5" height="0.75" fill="#222" opacity="0.65"/><rect x="40.8" y="52.40" width="3.4" height="0.75" fill="#222" opacity="0.61"/><rect x="44.7" y="52.40" width="3.6" height="0.75" fill="#222" opacity="0.54"/><rect x="8.5" y="53.90" width="1.7" height="0.75" fill="#222" opacity="0.52"/><rect x="10.7" y="53.90" width="4.7" height="0.75" fill="#222" opacity="0.62"/><rect x="15.9" y="53.90" width="1.3" height="0.75" fill="#222" opacity="0.52"/><rect x="18.1" y="53.90" width="3.6" height="0.75" fill="#222" opacity="0.74"/><rect x="22.5" y="53.90" width="1.4" height="0.75" fill="#222" opacity="0.70"/><rect x="24.6" y="53.90" width="4.3" height="0.75" fill="#222" opacity="0.77"/><rect x="29.8" y="53.90" width="1.5" height="0.75" fill="#222" opacity="0.80"/><rect x="32.2" y="53.90" width="4.8" height="0.75" fill="#222" opacity="0.54"/><rect x="37.5" y="53.90" width="1.6" height="0.75" fill="#222" opacity="0.52"/><rect x="8.5" y="56.20" width="4.3" height="0.75" fill="#222" opacity="0.43"/><rect x="13.7" y="56.20" width="3.6" height="0.75" fill="#222" opacity="0.36"/><rect x="17.7" y="56.20" width="1.6" height="0.75" fill="#222" opacity="0.45"/><rect x="19.8" y="56.20" width="2.4" height="0.75" fill="#222" opacity="0.39"/><rect x="22.7" y="56.20" width="2.2" height="0.75" fill="#222" opacity="0.36"/><rect x="25.7" y="56.20" width="2.6" height="0.75" fill="#222" opacity="0.36"/><rect x="29.2" y="56.20" width="3.1" height="0.75" fill="#222" opacity="0.46"/><rect x="33.1" y="56.20" width="1.3" height="0.75" fill="#222" opacity="0.39"/><rect x="35.1" y="56.20" width="4.1" height="0.75" fill="#222" opacity="0.38"/><rect x="40.1" y="56.20" width="3.2" height="0.75" fill="#222" opacity="0.35"/><rect x="44.2" y="56.20" width="1.5" height="0.75" fill="#222" opacity="0.46"/><rect x="8.5" y="57.75" width="1.2" height="0.75" fill="#222" opacity="0.35"/><rect x="10.6" y="57.75" width="4.9" height="0.75" fill="#222" opacity="0.30"/><rect x="16.2" y="57.75" width="3.1" height="0.75" fill="#222" opacity="0.46"/><rect x="19.8" y="57.75" width="3.1" height="0.75" fill="#222" opacity="0.38"/><rect x="23.7" y="57.75" width="2.2" height="0.75" fill="#222" opacity="0.49"/><rect x="26.5" y="57.75" width="2.0" height="0.75" fill="#222" opacity="0.43"/><rect x="29.2" y="57.75" width="1.6" height="0.75" fill="#222" opacity="0.43"/><rect x="31.3" y="57.75" width="4.2" height="0.75" fill="#222" opacity="0.43"/><rect x="36.3" y="57.75" width="2.2" height="0.75" fill="#222" opacity="0.38"/><rect x="8.5" y="62.00" width="2.0" height="0.75" fill="#222" opacity="0.57"/><rect x="12.0" y="62.00" width="4.6" height="0.75" fill="#222" opacity="0.36"/><rect x="17.1" y="62.00" width="2.2" height="0.75" fill="#222" opacity="0.57"/><rect x="20.0" y="62.00" width="2.6" height="0.75" fill="#222" opacity="0.55"/><rect x="23.2" y="62.00" width="3.0" height="0.75" fill="#222" opacity="0.48"/><rect x="27.0" y="62.00" width="4.1" height="0.75" fill="#222" opacity="0.51"/><rect x="8.5" y="64.60" width="2.4" height="0.75" fill="#222" opacity="0.33"/><rect x="11.8" y="64.60" width="3.7" height="0.75" fill="#222" opacity="0.45"/><rect x="16.1" y="64.60" width="2.9" height="0.75" fill="#222" opacity="0.45"/><rect x="19.7" y="64.60" width="1.7" height="0.75" fill="#222" opacity="0.39"/><rect x="22.3" y="64.60" width="2.1" height="0.75" fill="#222" opacity="0.35"/><rect x="25.0" y="64.60" width="3.9" height="0.75" fill="#222" opacity="0.46"/><rect x="29.3" y="64.60" width="1.8" height="0.75" fill="#222" opacity="0.35"/><rect x="31.7" y="64.60" width="3.2" height="0.75" fill="#222" opacity="0.33"/><rect x="35.5" y="64.60" width="1.9" height="0.75" fill="#222" opacity="0.49"/><rect x="38.3" y="64.60" width="1.6" height="0.75" fill="#222" opacity="0.49"/><rect x="40.3" y="64.60" width="2.7" height="0.75" fill="#222" opacity="0.49"/><rect x="43.9" y="64.60" width="4.0" height="0.75" fill="#222" opacity="0.39"/><rect x="48.4" y="64.60" width="1.1" height="0.75" fill="#222" opacity="0.32"/><rect x="8.5" y="66.15" width="2.7" height="0.75" fill="#222" opacity="0.30"/><rect x="11.8" y="66.15" width="4.2" height="0.75" fill="#222" opacity="0.43"/><rect x="16.7" y="66.15" width="3.6" height="0.75" fill="#222" opacity="0.39"/><rect x="20.8" y="66.15" width="3.5" height="0.75" fill="#222" opacity="0.38"/><rect x="25.1" y="66.15" width="4.7" height="0.75" fill="#222" opacity="0.39"/><rect x="30.5" y="66.15" width="4.0" height="0.75" fill="#222" opacity="0.39"/><rect x="35.1" y="66.15" width="3.9" height="0.75" fill="#222" opacity="0.48"/><rect x="39.9" y="66.15" width="3.9" height="0.75" fill="#222" opacity="0.48"/><rect x="44.6" y="66.15" width="3.6" height="0.75" fill="#222" opacity="0.39"/><rect x="48.8" y="66.15" width="0.7" height="0.75" fill="#222" opacity="0.32"/><rect x="8.5" y="67.70" width="4.2" height="0.75" fill="#222" opacity="0.45"/><rect x="13.5" y="67.70" width="2.2" height="0.75" fill="#222" opacity="0.39"/><rect x="16.3" y="67.70" width="3.6" height="0.75" fill="#222" opacity="0.39"/><rect x="20.6" y="67.70" width="4.7" height="0.75" fill="#222" opacity="0.33"/><rect x="26.2" y="67.70" width="4.2" height="0.75" fill="#222" opacity="0.38"/><rect x="31.0" y="67.70" width="4.9" height="0.75" fill="#222" opacity="0.32"/><rect x="36.6" y="67.70" width="1.8" height="0.75" fill="#222" opacity="0.46"/><rect x="39.4" y="67.70" width="3.2" height="0.75" fill="#222" opacity="0.32"/><rect x="43.3" y="67.70" width="3.3" height="0.75" fill="#222" opacity="0.45"/><rect x="47.3" y="67.70" width="2.2" height="0.75" fill="#222" opacity="0.46"/><rect x="8.5" y="69.25" width="2.8" height="0.75" fill="#222" opacity="0.49"/><rect x="11.8" y="69.25" width="3.8" height="0.75" fill="#222" opacity="0.38"/><rect x="16.4" y="69.25" width="1.7" height="0.75" fill="#222" opacity="0.49"/><rect x="18.7" y="69.25" width="1.4" height="0.75" fill="#222" opacity="0.36"/><rect x="20.8" y="69.25" width="1.3" height="0.75" fill="#222" opacity="0.39"/><rect x="22.7" y="69.25" width="3.9" height="0.75" fill="#222" opacity="0.38"/><rect x="27.1" y="69.25" width="1.9" height="0.75" fill="#222" opacity="0.45"/></svg></div>
<div class="a xbtn" style="left:483px;top:108px"><svg width="11.5" height="11.5" viewBox="0 0 11.5 11.5" style="display:block"><path d="M3.9 3.9L7.6 7.6M7.6 3.9L3.9 7.6" stroke="#fff" stroke-width="1.5" stroke-linecap="round"/></svg></div>
<div class="a ebtn" style="left:451.5px;top:199.5px">编辑</div>
<div class="a fname" style="left:421px;width:80px;top:210px">大纲.pdf</div>

<svg class="a" style="left:515px;top:136px" width="59" height="72"><rect x="1.5" y="1.5" width="56" height="68.5" rx="1.5" fill="none" stroke="#cacaca" stroke-width="1.2" stroke-dasharray="1.6 2.1"/></svg>
<div class="a" style="left:534.5px;top:172.3px;width:19px;height:1.3px;background:#c9c9c9"></div>
<div class="a" style="left:543.3px;top:163.5px;width:1.3px;height:19px;background:#c9c9c9"></div>

<div class="a" style="left:182.5px;top:245px;font-size:7.8px;letter-spacing:-0.4px;color:#555;line-height:11px">已上传3个文件，共696.32K。</div>
<div class="a" style="left:482px;top:238.5px;width:94px;height:24px;background:#fff;border:1px solid #ddd;border-radius:3px;font-size:7.8px;letter-spacing:-0.35px;color:#666;line-height:22px;text-align:center;padding-left:1.5px">继续添加（批量转换）</div>
<div class="a" style="left:586px;top:238.5px;width:72px;height:24px;background:#4a93ea;border-radius:3px;font-size:7.8px;letter-spacing:-0.3px;color:#fff;line-height:24px;padding-left:27.5px">开始处理</div>
<svg class="a" style="left:601px;top:245px" width="10" height="10" viewBox="0 0 10 10">
  <path d="M2.6 3.2h5" stroke="#fff" stroke-width="1.3"/><path d="M0.9 3.2 L3.4 1.2 V5.2 Z" fill="#fff"/>
  <path d="M1.4 7.4h5.2" stroke="#fff" stroke-width="1.3"/><path d="M8.6 7.4 L6.1 5.4 V9.4 Z" fill="#fff"/>
</svg>

<!-- notice -->
<div class="a" style="left:173px;top:285.3px;width:3px;height:3px;border-radius:50%;background:#2b8cee"></div>
<div class="a" style="left:183.5px;top:280.5px;font-size:8.3px;letter-spacing:0.5px;color:#e2383a;line-height:12px">注意：如果<span style="letter-spacing:-0.45px;margin-right:0.6px">PDF</span>有密码保护，请先使用<span style="color:#3a86d8;font-size:9.1px;letter-spacing:0.3px;margin-left:4.5px;margin-right:5.3px"><span style="letter-spacing:-0.3px">PDF</span>密码解除</span>去除加密保护再上传文件</div>

<!-- settings card -->
<div class="card" style="left:169px;top:301px;width:503px;height:121px"></div>
<div class="a" style="left:376.5px;top:312.5px;font-size:9px;letter-spacing:0.55px;color:#4a9ae0;line-height:13px">自定义设置转换如下</div>
<div class="a lab" style="top:343px">页码选择</div>
<div class="a lab" style="top:369.5px">选择转换格式</div>
<div class="a lab" style="top:396.5px">转换模式</div>
<div class="a rad on" style="left:279px;top:344.3px"></div><div class="a opt" style="left:290.5px;top:343px">转换每一页</div>
<div class="a rad" style="left:373px;top:344.5px"></div><div class="a opt" style="left:384.5px;top:343px">指定页转换</div>
<div class="a rad on" style="left:279px;top:370.5px"></div><div class="a opt" style="left:290.5px;top:369.5px;font-size:9.5px;letter-spacing:0">pptx</div>
<div class="a rad" style="left:373px;top:370.5px"></div><div class="a opt" style="left:384.5px;top:369.5px;font-size:9.5px;letter-spacing:0">ppt</div>
<div class="a rad on" style="left:279px;top:397.3px"></div><div class="a opt" style="left:290.5px;top:396.5px">追求转换速度</div>
<div class="a rad" style="left:373px;top:396.8px"></div><div class="a opt" style="left:384.5px;top:396.5px">易于后续编辑</div>
<div class="a ocr" style="left:438px;top:397.5px">OCR</div>
<div class="a rad" style="left:467px;top:396.8px"></div><div class="a opt" style="left:479px;top:396.5px">尽量保持排版</div>
<div class="a ocr" style="left:532.5px;top:397.5px">OCR</div>
</body></html>
